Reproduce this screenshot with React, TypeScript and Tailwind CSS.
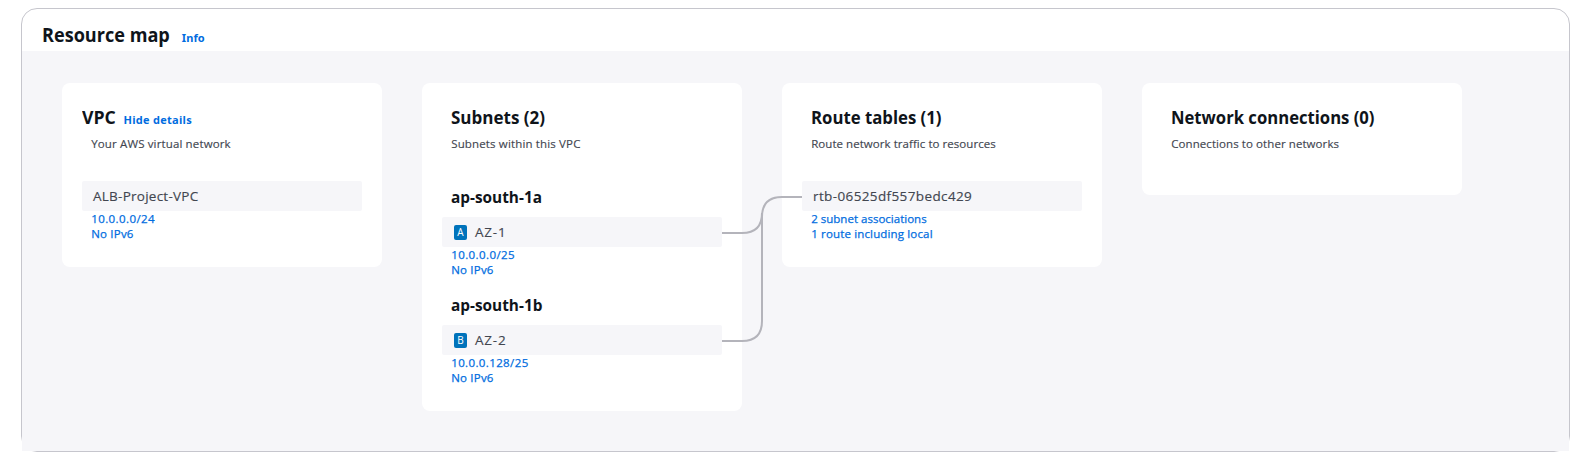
import type { ReactNode } from 'react';

function Card({ className = '', children }: { className?: string; children: ReactNode }) {
  return <section className={`w-80 rounded-lg bg-white px-5 pt-[23px] ${className}`}>{children}</section>;
}

function Description({ className, children }: { className: string; children: ReactNode }) {
  return (
    <p className={`mt-2 mb-[-1px] pl-[9.2px] text-[11.5px] leading-4 text-[#424650] [-webkit-text-stroke:0.15px] ${className}`}>
      {children}
    </p>
  );
}

function Resource({ className = '', badge, children }: { className?: string; badge?: string; children: ReactNode }) {
  return (
    <div className={`flex h-[30px] items-center rounded-xs bg-[#f6f6f9] pl-[11px] text-[13.5px] leading-5 text-[#424650] ${className}`}>
      {badge && (
        <span className="mr-2 ml-px flex h-[15px] w-[13px] items-center justify-center rounded-xs bg-[#0073bb] text-[10px] leading-none tracking-normal text-white">
          {badge}
        </span>
      )}
      <span className="[-webkit-text-stroke:0.15px]">{children}</span>
    </div>
  );
}

function Links({ children }: { children: ReactNode }) {
  return (
    <div className="flex flex-col items-start pl-[9.2px] text-[11.5px] leading-[15px] text-[#006ce0] [-webkit-text-stroke:0.25px]">
      {children}
    </div>
  );
}

const h2 = 'origin-left text-lg leading-[22px] font-bold text-[#0f141a]';
const h3 = 'ml-[9px] origin-left scale-x-96 text-base leading-5 font-bold text-[#0f141a]';

export default function App() {
  return (
    <main className="h-[459px] bg-white pt-2 pl-[21px] font-['Open_Sans','Noto_Sans',sans-serif]">
      <div className="flex h-[444px] w-[1549px] flex-col rounded-2xl border border-[#c6c6cd]">
        <header className="flex h-[42px] shrink-0 items-baseline pt-3.5 pl-[19.5px]">
          <h1 className="mr-[-13px] origin-left scale-x-[0.905] text-xl leading-6 font-bold text-[#0f141a]">Resource map</h1>
          <a className="ml-3 font-['Noto_Sans'] text-[11px] leading-4 font-bold tracking-[0.1px] text-[#006ce0]">Info</a>
        </header>
        <div className="relative flex flex-1 items-start gap-10 bg-[#f6f6f9] pt-8 pl-10">
          <Card className="pb-[26px]">
            <div className="flex h-[22px] items-baseline">
              <h2 className={`${h2} scale-x-[0.98]`}>VPC</h2>
              <a className="ml-[7px] text-[11px] leading-4 font-bold tracking-[0.28px] text-[#006ce0]">Hide details</a>
            </div>
            <Description className="tracking-[0.14px]">Your AWS virtual network</Description>
            <Resource className="mt-[30px] tracking-[0.25px]">ALB-Project-VPC</Resource>
            <Links>
              <a className="tracking-[0.42px]">10.0.0.0/24</a>
              <a className="tracking-[0.2px]">No IPv6</a>
            </Links>
          </Card>

          <Card className="pb-[26px]">
            <h2 className={`${h2} ml-[9px] scale-x-[0.945]`}>Subnets (2)</h2>
            <Description className="tracking-[0.15px]">Subnets within this VPC</Description>
            <h3 className={`${h3} mt-9`}>ap-south-1a</h3>
            <Resource badge="A" className="mt-2.5 tracking-[0.8px]">AZ-1</Resource>
            <Links>
              <a className="tracking-[0.42px]">10.0.0.0/25</a>
              <a className="tracking-[0.2px]">No IPv6</a>
            </Links>
            <h3 className={`${h3} mt-[18px]`}>ap-south-1b</h3>
            <Resource badge="B" className="mt-2.5 tracking-[0.8px]">AZ-2</Resource>
            <Links>
              <a className="tracking-[0.38px]">10.0.0.128/25</a>
              <a className="tracking-[0.2px]">No IPv6</a>
            </Links>
          </Card>

          <Card className="pb-[26px]">
            <h2 className={`${h2} ml-[9px] scale-x-[0.93]`}>Route tables (1)</h2>
            <Description className="tracking-[0.05px]">Route network traffic to resources</Description>
            <Resource className="mt-[30px] tracking-[0.38px]">rtb-06525df557bedc429</Resource>
            <Links>
              <a className="tracking-[0.01px]">2 subnet associations</a>
              <a className="tracking-[0.15px]">1 route including local</a>
            </Links>
          </Card>

          <Card className="pb-11">
            <h2 className={`${h2} ml-[9px] scale-x-[0.925]`}>Network connections (0)</h2>
            <Description className="tracking-[0.08px]">Connections to other networks</Description>
          </Card>

          <svg className="absolute top-[144px] left-[700px]" width="80" height="148" fill="none" stroke="#b4b4bb" strokeWidth="2">
            <path d="M0 38H20Q40 38 40 18" />
            <path d="M0 146H20Q40 146 40 126V22Q40 2 60 2H80" />
          </svg>
        </div>
      </div>
    </main>
  );
}
